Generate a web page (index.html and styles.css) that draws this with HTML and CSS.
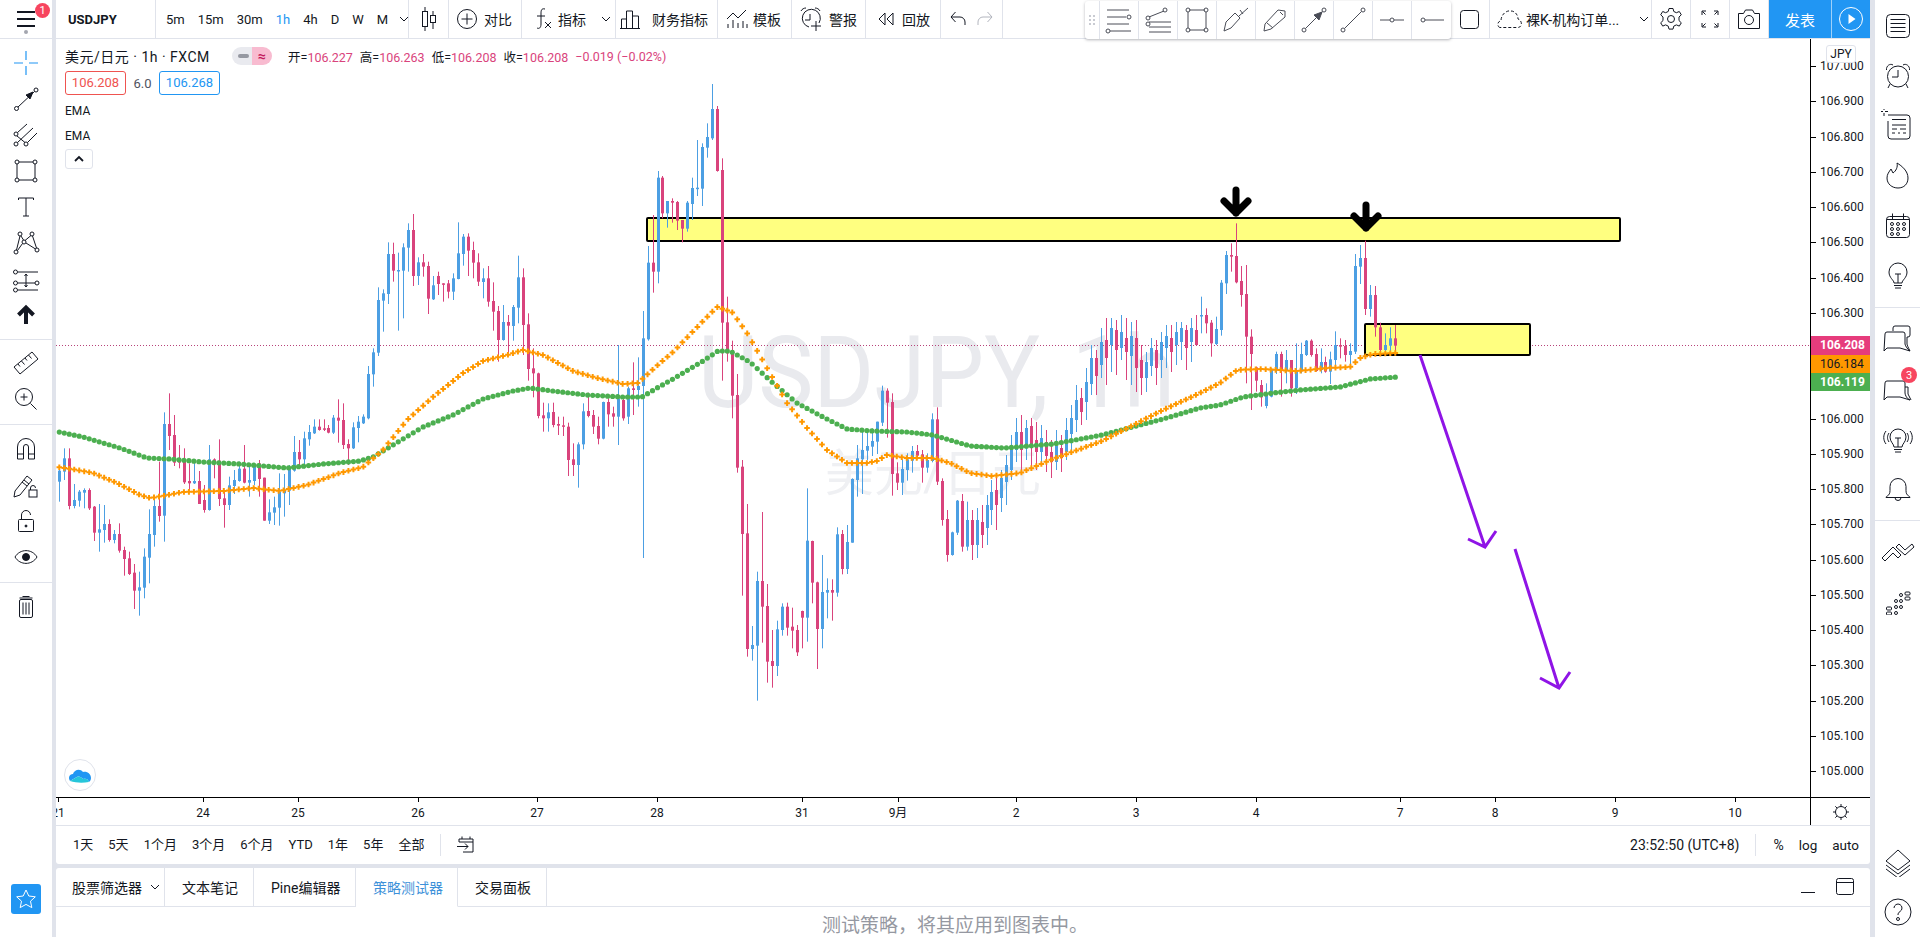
FILE: index.html
```html
<!DOCTYPE html>
<html lang="zh-CN">
<head>
    <meta charset="UTF-8">
    <title>USDJPY 106.208</title>
    <link rel="stylesheet" href="styles.css">
</head>
<body>
<div class="app">
    <aside class="left-bar">
        <div class="menu-cell">
            <span class="burger"><i></i><i></i><i></i></span>
            <span class="badge menu-badge">1</span>
            <span class="menu-dot"></span>
        </div>
        <div class="tool-group first">
            <div class="tool"><svg class="ico blue" width="28" height="28" viewBox="0 0 28 28"><path d="M2 14h9M17 14h9M14 2v9M14 17v9"/></svg></div>
            <div class="tool"><svg class="ico" width="28" height="28" viewBox="0 0 28 28"><circle cx="4.5" cy="23.5" r="2"/><circle cx="24" cy="5" r="2"/><path d="M6 22L22.5 6.5"/><path class="solid" d="M21 7l-7 3 4 4z"/></svg></div>
            <div class="tool"><svg class="ico" width="28" height="28" viewBox="0 0 28 28"><circle cx="4" cy="13" r="2"/><circle cx="4" cy="23" r="2"/><circle cx="14" cy="23" r="2"/><path d="M5.5 11.500L15 3M5.500 21.500L21 7M15.500 21.500L25 12M5 15l8 6.500"/></svg></div>
            <div class="tool"><svg class="ico" width="28" height="28" viewBox="0 0 28 28"><path d="M5 7v14M23 7v14M7 5h14M7 23h14"/><circle cx="5" cy="5" r="2"/><circle cx="23" cy="5" r="2"/><circle cx="5" cy="23" r="2"/><circle cx="23" cy="23" r="2"/></svg></div>
            <div class="tool"><svg class="ico" width="28" height="28" viewBox="0 0 28 28"><path d="M6.500 7V5h15v2M14 5v18M11 23h6"/></svg></div>
            <div class="tool"><svg class="ico" width="28" height="28" viewBox="0 0 28 28"><circle cx="8" cy="5" r="2"/><circle cx="20" cy="5" r="2"/><circle cx="4" cy="23" r="2"/><circle cx="25" cy="21" r="2"/><circle cx="12" cy="13" r="2"/><path d="M8 7l-3.500 14M9 7l2.500 4M19 6.500l-6 5M20.500 7l4 12M5.500 21.500L10.500 14.500M14 14l9.500 6"/></svg></div>
            <div class="tool"><svg class="ico" width="28" height="28" viewBox="0 0 28 28"><circle cx="3.500" cy="7" r="2"/><circle cx="3.500" cy="18" r="2"/><circle cx="25" cy="18" r="2"/><circle cx="3.500" cy="25" r="2"/><path d="M6 7h20M6 18h17M6 25h20M14 9v13M12.500 11l1.500-2 1.500 2M12.500 20l1.500 2 1.500-2"/></svg></div>
            <div class="tool"><svg class="ico bold" width="28" height="28" viewBox="0 0 28 28"><path d="M14 23V7M6.500 14L14 6.500l7.500 7.500"/></svg></div>
        </div>
        <div class="tool-sep"></div>
        <div class="tool-group">
            <div class="tool"><svg class="ico" width="28" height="28" viewBox="0 0 28 28"><path d="M2 18L20 3l6 7-18 15zM6 15l2 2.500M9.500 12l3 3.500M13 9l2 2.500M16.500 6l3 3.500"/></svg></div>
            <div class="tool"><svg class="ico" width="28" height="28" viewBox="0 0 28 28"><circle cx="12" cy="12" r="8.500"/><path d="M8.500 12h7M12 8.500v7M18.500 18.500l6 6"/></svg></div>
        </div>
        <div class="tool-sep wide"></div>
        <div class="tool-group">
            <div class="tool"><svg class="ico" width="28" height="28" viewBox="0 0 28 28"><path d="M5.500 24V12a8.500 8.500 0 0 1 17 0v12h-6V12a2.500 2.500 0 0 0-5 0v12zM5.500 19h6M16.500 19h6"/></svg></div>
            <div class="tool"><svg class="ico" width="28" height="28" viewBox="0 0 28 28"><path d="M3 20L15 5l5 4L8 24l-6 2zM12 9l5 4M10 11l5 4"/><rect x="17" y="19" width="8" height="7"/><path d="M18.500 19v-2a2.500 2.500 0 0 1 5 0"/></svg></div>
            <div class="tool"><svg class="ico" width="28" height="28" viewBox="0 0 28 28"><rect x="6.500" y="12.500" width="15" height="12" rx="1"/><path d="M9.500 12.500V8a4.500 4.500 0 0 1 9 0"/><circle class="solid" cx="14" cy="19" r="1"/></svg></div>
            <div class="tool"><svg class="ico" width="28" height="28" viewBox="0 0 28 28"><path d="M3 14c5-8.500 17-8.500 22 0-5 8.500-17 8.500-22 0z"/><circle class="solid" cx="14" cy="14" r="3.500"/></svg></div>
        </div>
        <div class="tool-sep wide"></div>
        <div class="tool-group">
            <div class="tool"><svg class="ico" width="28" height="28" viewBox="0 0 28 28"><rect x="7.500" y="6.500" width="13" height="18" rx="1.500"/><path d="M7.500 5h13M10.500 3.500h7M11 9.500v12M14 9.500v12M17 9.500v12"/></svg></div>
        </div>
        <button class="star-btn"><svg class="ico white" width="24" height="24" viewBox="0 0 24 24"><path d="M12 3l2.800 6 6.500.800-4.800 4.400 1.300 6.400L12 17.400l-5.800 3.200 1.300-6.400-4.800-4.400 6.500-.800z"/></svg></button>
    </aside>

    <div class="main">
        <header class="top-bar">
            <div class="cell symbol">USDJPY</div>
            <div class="cell intervals">
                <span>5m</span><span>15m</span><span>30m</span><span class="on">1h</span><span>4h</span><span>D</span><span>W</span><span>M</span>
                <svg class="ico chev" width="10" height="6" viewBox="0 0 10 6"><path d="M1 1l4 4 4-4"/></svg>
            </div>
            <div class="cell w-candle"><svg class="ico" width="28" height="28" viewBox="0 0 28 28"><path d="M10 2v24M18 6v18"/><rect class="fill-w" x="7.500" y="6.500" width="5" height="15"/><rect class="fill-w" x="15.500" y="10.500" width="5" height="7"/></svg></div>
            <div class="cell w-compare"><svg class="ico" width="22" height="22" viewBox="0 0 22 22"><circle cx="11" cy="11" r="9.500"/><path d="M11 5.500v11M5.500 11h11"/></svg><span>对比</span></div>
            <div class="cell w-indic"><svg class="ico" width="22" height="24" viewBox="0 0 22 24"><path d="M14 2c-4-1-4 2-4 5v10c0 4-2 5-4 4M6 9h8M14 15l6 6M20 15l-6 6"/></svg><span>指标</span><svg class="ico chev" width="10" height="6" viewBox="0 0 10 6"><path d="M1 1l4 4 4-4"/></svg></div>
            <div class="cell w-fin"><svg class="ico" width="22" height="22" viewBox="0 0 22 22"><path d="M1.500 20V11h5v9M6.500 20V3h6v17M12.500 20V8h6v12M0 20.500h20"/></svg><span>财务指标</span></div>
            <div class="cell w-tpl"><svg class="ico" width="24" height="24" viewBox="0 0 24 24"><path d="M2 12l6-6 5 5 8-8M3 21v-4M8 21v-8M13 21v-5M18 21v-7M22 21v-4"/></svg><span>模板</span></div>
            <div class="cell w-alert"><svg class="ico" width="26" height="26" viewBox="0 0 26 26"><path d="M21 17a9 9 0 1 0-10 4M12 8v6H7M3 5c1-2 3-3 5-3M22 5c-1-2-3-3-5-3M18 15v10M13 20h10"/></svg><span>警报</span></div>
            <div class="cell w-replay"><svg class="ico" width="20" height="18" viewBox="0 0 20 18"><path d="M9 3L3 9l6 6zM17 3l-6 6 6 6z"/></svg><span>回放</span></div>
            <div class="cell w-undo"><svg class="ico" width="20" height="20" viewBox="0 0 20 20"><path d="M3 8h9a5 5 0 0 1 5 5v3M7.500 3L3 8l4.500 5"/></svg><svg class="ico pale" width="20" height="20" viewBox="0 0 20 20"><path d="M17 8H8a5 5 0 0 0-5 5v3M12.500 3L17 8l-4.500 5"/></svg></div>

            <div class="draw-bar">
                <div class="handle"></div>
                <div class="draw-btn"><svg class="ico" width="28" height="28" viewBox="0 0 28 28"><path d="M2 4h22M2 11h19M2 18h22M5 25h21"/><circle cx="24" cy="11" r="2"/><circle cx="3" cy="25" r="2"/></svg></div>
                <div class="draw-btn"><svg class="ico" width="28" height="28" viewBox="0 0 28 28"><path d="M5 11l15-6M5 16h22M5 21h22M5 26h22"/><circle cx="4" cy="12" r="2"/><circle cx="21" cy="4" r="2"/><circle cx="4" cy="18" r="2"/></svg></div>
                <div class="draw-btn"><svg class="ico" width="28" height="28" viewBox="0 0 28 28"><path d="M5 6v16M23 6v16M6 4h16M6 24h16"/><circle cx="5" cy="4" r="2"/><circle cx="23" cy="4" r="2"/><circle cx="5" cy="24" r="2"/><circle cx="23" cy="24" r="2"/></svg></div>
                <div class="draw-btn"><svg class="ico" width="28" height="28" viewBox="0 0 28 28"><path d="M2 25l2-9 9-9 5 5-9 10zM17 10l9-8M18 4l3 4"/></svg></div>
                <div class="draw-btn"><svg class="ico" width="28" height="28" viewBox="0 0 28 28"><path d="M3 25l1-7L17 4l7 1 0 6-14 12zM6 17l6 5M19 6l3 3"/></svg></div>
                <div class="draw-btn"><svg class="ico" width="28" height="28" viewBox="0 0 28 28"><circle cx="4" cy="24" r="2"/><circle cx="24" cy="4" r="2"/><path d="M5.500 22.500l17-17"/><path class="solid" d="M22 6l-8 3 5 5z"/></svg></div>
                <div class="draw-btn"><svg class="ico" width="28" height="28" viewBox="0 0 28 28"><circle cx="4" cy="24" r="2"/><circle cx="24" cy="4" r="2"/><path d="M5.500 22.500l17-17"/></svg></div>
                <div class="draw-btn"><svg class="ico" width="28" height="28" viewBox="0 0 28 28"><circle cx="14" cy="14" r="2"/><path d="M2 14h10M16 14h10"/></svg></div>
                <div class="draw-btn"><svg class="ico" width="28" height="28" viewBox="0 0 28 28"><circle cx="5" cy="14" r="2"/><path d="M7 14h19"/></svg></div>
            </div>

            <div class="cell w-sq"><svg class="ico" width="24" height="24" viewBox="0 0 24 24"><rect x="2.500" y="3.500" width="18" height="18" rx="3"/></svg></div>
            <div class="cell w-layout"><svg class="ico dash" width="26" height="22" viewBox="0 0 26 22"><path d="M3 19.500C0 19 0 13 4 13 4 6 10 2 14 3c4 0 7 4 7 8 4 1 5 8 0 8.500z"/></svg><span class="layout-name">裸K-机构订单...</span><svg class="ico chev" width="10" height="6" viewBox="0 0 10 6"><path d="M1 1l4 4 4-4"/></svg></div>
            <div class="cell w-sq"><svg class="ico" width="24" height="24" viewBox="0 0 24 24"><path d="M10 1.500h4l.800 3 2.600 1.200 2.900-1.200 2 3.300-2.300 2.200v3.600l2.300 2.200-2 3.300-2.900-1.200-2.600 1.200-.800 3h-4l-.800-3-2.600-1.200-2.900 1.200-2-3.300 2.300-2.200V10l-2.300-2.200 2-3.300 2.900 1.200 2.600-1.200z"/><circle cx="12" cy="12" r="3.500"/></svg></div>
            <div class="cell w-sq"><svg class="ico" width="20" height="20" viewBox="0 0 20 20"><path d="M2 6V2h4M14 2h4v4M18 14v4h-4M6 18H2v-4M2.500 2.500l3 3M17.500 2.500l-3 3M17.500 17.500l-3-3M2.500 17.500l3-3"/></svg></div>
            <div class="cell w-sq"><svg class="ico" width="24" height="24" viewBox="0 0 24 24"><path d="M1.500 6.500h5l2-3.500h7l2 3.500h5v15h-21z"/><circle cx="12" cy="13" r="4.500"/></svg></div>
            <button class="publish">发表</button>
            <button class="play"><svg class="ico white" width="26" height="26" viewBox="0 0 26 26"><circle cx="13" cy="13" r="11.500"/><path class="solid-w" d="M10.500 8l7 5-7 5z"/></svg></button>
        </header>

        <section class="chart">
            <div class="chart-row">
                <div class="pane" id="pane">
                    <div class="legend">
                        <div class="legend-top">
                            <span class="legend-title">美元/日元 · 1h · FXCM</span>
                            <span class="pill"><i class="pill-l"></i><b class="pill-r">≈</b></span>
                            <span class="ohlc">开=<em>106.227</em></span><span class="ohlc">高=<em>106.263</em></span><span class="ohlc">低=<em>106.208</em></span><span class="ohlc">收=<em>106.208</em></span><span class="ohlc"><em>−0.019 (−0.02%)</em></span>
                        </div>
                        <div class="legend-quote">
                            <span class="chip sell">106.208</span><span class="spread">6.0</span><span class="chip buy">106.268</span>
                        </div>
                        <div class="study">EMA</div>
                        <div class="study">EMA</div>
                        <div class="collapse"><svg class="ico bold-s" width="12" height="8" viewBox="0 0 12 8"><path d="M2 6l4-4 4 4"/></svg></div>
                    </div>
                    <div class="tv-logo"><svg width="24" height="16" viewBox="0 0 24 16"><path fill="#2196f3" d="M2 14c-2-3-1-7 3-7 1-4 7-6 10-2 4-1 8 2 8 6 0 2-1 3-2 4-1-3-3-4-6-3-2-2-4-3-6-2-2 1-4 2-7 4z"/><path fill="#26c6da" d="M2 14c3-2 5-3 7-4 2-1 4 0 6 2 3-1 5 0 6 3-6 1-13 1-19-1z"/></svg></div>
                </div>
                <div class="price-axis" id="price-axis">
                    <div class="unit">JPY</div>
                    <div class="tag tag-last">106.208</div>
                    <div class="tag tag-orange">106.184</div>
                    <div class="tag tag-green">106.119</div>
                </div>
            </div>
            <div class="time-row">
                <div class="time-axis" id="time-axis"></div>
                <div class="time-gear"><svg class="ico" width="18" height="18" viewBox="0 0 18 18"><circle cx="9" cy="9" r="5.500"/><path d="M9 1v2.500M9 14.500V17M1 9h2.500M14.500 9H17M3.300 3.300l1.800 1.800M12.900 12.900l1.800 1.800M14.700 3.300l-1.800 1.800M5.100 12.900l-1.800 1.800"/></svg></div>
            </div>
        </section>

        <div class="range-bar">
            <div class="ranges"><span>1天</span><span>5天</span><span>1个月</span><span>3个月</span><span>6个月</span><span>YTD</span><span>1年</span><span>5年</span><span>全部</span></div>
            <div class="range-sep"></div>
            <svg class="ico goto" width="20" height="20" viewBox="0 0 20 20"><path d="M3 4h14v13H7M3 4v3h14M6 1.500V4M14 1.500V4M1 11.500h11M9 8.500l3 3-3 3"/></svg>
            <div class="range-right">
                <span class="clock">23:52:50 (UTC+8)</span>
                <div class="range-sep"></div>
                <span class="pct">%</span><span class="log">log</span><span class="auto">auto</span>
            </div>
        </div>

        <section class="panel">
            <div class="tabs">
                <div class="tab t1">股票筛选器<svg class="ico chev" width="10" height="6" viewBox="0 0 10 6"><path d="M1 1l4 4 4-4"/></svg></div>
                <div class="tab t2">文本笔记</div>
                <div class="tab t3">Pine编辑器</div>
                <div class="tab t4 active">策略测试器</div>
                <div class="tab t5">交易面板</div>
                <div class="tabs-right">
                    <svg class="ico" width="14" height="14" viewBox="0 0 14 14"><path d="M0 12.500h14"/></svg>
                    <svg class="ico" width="18" height="18" viewBox="0 0 18 18"><rect x=".5" y=".5" width="17" height="16" rx="2"/><path d="M.5 4.500h17"/></svg>
                </div>
            </div>
            <div class="panel-msg">测试策略，将其应用到图表中。</div>
        </section>
    </div>

    <aside class="right-bar">
        <div class="side-btn"><svg class="ico" width="30" height="30" viewBox="0 0 30 30"><rect x="3.500" y="3.500" width="23" height="23" rx="4"/><path d="M7.500 8.500h15M7.500 12.500h15M7.500 16.500h15M7.500 20.500h15"/></svg></div>
        <div class="side-btn"><svg class="ico" width="30" height="30" viewBox="0 0 30 30"><circle cx="15" cy="15.500" r="10.500"/><path d="M15 9v7H9M3.500 9C3 5 7 2 10 4M26.500 9c.5-4-3.500-7-6.500-5M7 23l-2 4M23 23l2 4"/></svg></div>
        <div class="side-btn"><svg class="ico" width="34" height="34" viewBox="0 0 34 34"><path d="M8 8h19a3 3 0 0 1 3 3v18a3 3 0 0 1-3 3H11a3 3 0 0 1-3-3V14M12 12.500h14M12 18h14M12 22h5M20 22h6M12 26h3M18 26h2M23 26h3M0 4.500h3M5 4.500h3M4 0v3M4 6v3" transform="translate(-1 -2)"/></svg></div>
        <div class="side-btn"><svg class="ico" width="30" height="30" viewBox="0 0 30 30"><path d="M15 27C9 27 4 23 4 17c0-4 2-6 4-9l2 4c3-2 5-6 4-10 5 3 11 8 11 15 0 6-4 10-10 10z"/></svg></div>
        <div class="side-btn"><svg class="ico" width="30" height="30" viewBox="0 0 30 30"><rect x="3.500" y="5.500" width="23" height="21" rx="3"/><path d="M9.500 2.500v6M20.500 2.500v6M3.500 8.500h23"/><circle cx="9" cy="13" r="1.500"/><circle cx="15" cy="13" r="1.500"/><circle cx="21" cy="13" r="1.500"/><circle cx="9" cy="18" r="1.500"/><circle cx="15" cy="18" r="1.500"/><circle cx="21" cy="18" r="1.500"/><circle cx="9" cy="23" r="1.500"/><circle cx="15" cy="23" r="1.500"/></svg></div>
        <div class="side-btn"><svg class="ico" width="30" height="30" viewBox="0 0 30 30"><path d="M11 22c0-3-5-5-5-11a9 9 0 0 1 18 0c0 6-5 8-5 11zM11 24.500h8M12 27h6M15 22v-9M12 13h6"/></svg></div>
        <div class="side-sep"></div>
        <div class="side-btn"><svg class="ico" width="32" height="32" viewBox="0 0 32 32"><path d="M11 8V5a2 2 0 0 1 2-2h13a2 2 0 0 1 2 2v7a2 2 0 0 1-2 2h-1M3 11a2 2 0 0 1 2-2h16a2 2 0 0 1 2 2v10c0 1 2 5 5 7l-10-3H5l-3 3zM25 14v7c0 1 1 3 3 7"/></svg></div>
        <div class="side-btn badge-wrap"><svg class="ico" width="32" height="32" viewBox="0 0 32 32"><path d="M3 10a2 2 0 0 1 2-2h16a2 2 0 0 1 2 2v10c0 2 2 6 5 7l-10-3H5l-3 3zM23 14h3v7l3 6"/></svg><span class="badge chat-badge">3</span></div>
        <div class="side-btn"><svg class="ico" width="34" height="34" viewBox="0 0 34 34"><path d="M13 25c0-3-4-5-4-10a8 8 0 0 1 16 0c0 5-4 7-4 10zM13 27.500h8M14 30h6M17 25v-9M14 16h6M5 9c-3 4-3 9 0 13M8 11c-2 3-2 6 0 9M29 9c3 4 3 9 0 13M26 11c2 3 2 6 0 9"/></svg></div>
        <div class="side-btn"><svg class="ico" width="30" height="30" viewBox="0 0 30 30"><path d="M3 23.500c0-2 4-1 4-7v-4a8 8 0 0 1 16 0v4c0 6 4 5 4 7zM12 23.500a3 3 0 0 0 6 0"/></svg></div>
        <div class="side-sep"></div>
        <div class="side-btn"><svg class="ico" width="34" height="22" viewBox="0 0 34 22"><path d="M1 17l11-11 8 8-3 3-5-5-8 8zM15 6l3-3 6 6 7-6 2 3-9 8z"/></svg></div>
        <div class="side-btn"><svg class="ico" width="26" height="26" viewBox="0 0 26 26"><rect x="1.500" y="18" width="5" height="3" rx="1"/><rect x="1.500" y="23" width="5" height="3" rx="1"/><circle cx="11" cy="12" r="1.500"/><circle cx="11" cy="18" r="1.500"/><circle cx="11" cy="24" r="1.500"/><circle cx="16" cy="12" r="1.500"/><circle cx="16" cy="18" r="1.500"/><circle cx="16" cy="6" r="1.500"/><rect x="20" y="3" width="5" height="3" rx="1"/><rect x="20" y="8" width="5" height="3" rx="1"/></svg></div>
        <div class="side-bottom">
            <div class="side-btn"><svg class="ico" width="30" height="30" viewBox="0 0 30 30"><path d="M15 3l12 11-12 9L3 14zM3 18l12 9 12-9M3 22l12 9 12-9"/></svg></div>
            <div class="side-btn"><svg class="ico" width="30" height="30" viewBox="0 0 30 30"><circle cx="15" cy="15" r="13"/><path d="M11 11a4 4 0 1 1 6 3.500c-1.500 1-2 2-2 3.500"/><circle cx="15" cy="22" r="1.500"/></svg></div>
        </div>
    </aside>
</div>
<script src="chart.js"></script>
</body>
</html>
```

FILE: styles.css
```css
:root {
    --gutter: #e0e3eb;
    --ink: #131722;
    --blue: #2196f3;
    --pink: #d9437c;
    --line: #e0e3eb;
}

* {
    margin: 0;
    padding: 0;
    box-sizing: border-box;
}

body {
    height: 100vh;
    overflow: hidden;
    background: var(--gutter);
    color: var(--ink);
    font-family: Roboto, "Noto Sans CJK SC", sans-serif;
    font-size: 13px;
}

.app {
    display: flex;
    height: 100%;
}

/* shared svg icon look */
.ico {
    fill: none;
    stroke: var(--ink);
    stroke-width: 1;
    flex: none;
    display: block;
}

.ico .solid { fill: var(--ink); }
.ico .fill-w { fill: #fff; }
.ico .solid-w { fill: #fff; stroke: none; }
.ico.blue { stroke: var(--blue); stroke-width: 1.2; }
.ico.bold { stroke-width: 4; }
.ico.bold-s { stroke-width: 1.8; }
.ico.white { stroke: #fff; }
.ico.pale { stroke: #b2b5be; }
.ico.dash { stroke-dasharray: 3 2; }

.badge {
    position: absolute;
    display: flex;
    align-items: center;
    justify-content: center;
    width: 15px;
    height: 15px;
    border-radius: 50%;
    background: #f7455f;
    color: #fff;
    font-size: 11px;
}

/* left toolbar */
.left-bar {
    width: 52px;
    margin-right: 4px;
    background: #fff;
    display: flex;
    flex-direction: column;
    flex: none;
}

.menu-cell {
    position: relative;
    height: 39px;
    border-bottom: 1px solid var(--line);
    flex: none;
}

.burger {
    position: absolute;
    left: 17px;
    top: 11px;
    width: 18px;
}

.burger i {
    display: block;
    height: 2px;
    margin-bottom: 5px;
    background: var(--ink);
}

.menu-badge {
    left: 35px;
    top: 3px;
}

.menu-dot {
    position: absolute;
    left: 24px;
    top: 30px;
    width: 4px;
    height: 4px;
    border-radius: 50%;
    background: #a3a6af;
}

.tool-group.first {
    padding-top: 6px;
}

.tool {
    height: 36px;
    display: flex;
    align-items: center;
    justify-content: center;
}

.tool-sep {
    height: 1px;
    margin: 6px 0 5px;
    background: var(--line);
    flex: none;
}

.tool-sep.wide {
    margin: 7px 0 6px;
}

.star-btn {
    width: 30px;
    height: 30px;
    margin: auto 0 23px 11px;
    background: var(--blue);
    border: none;
    border-radius: 3px;
    display: flex;
    align-items: center;
    justify-content: center;
}

/* middle column */
.main {
    flex: 1;
    min-width: 0;
    display: flex;
    flex-direction: column;
}

.top-bar {
    height: 39px;
    flex: none;
    display: flex;
    background: #fff;
    border-bottom: 1px solid var(--line);
}

.cell {
    display: flex;
    align-items: center;
    flex: none;
    border-right: 1px solid var(--line);
    font-size: 14px;
    white-space: nowrap;
}

.symbol {
    width: 100px;
    padding-left: 12px;
    font-weight: 700;
    font-size: 13px;
}

.intervals {
    width: 253px;
    padding-left: 10px;
    gap: 13px;
    font-size: 13px;
}

.intervals .on { color: var(--blue); }
.intervals .chev { margin-left: -2px; }

.w-candle { width: 40px; justify-content: center; }
.w-compare { width: 73px; padding-left: 7px; gap: 6px; }
.w-indic { width: 94px; padding-left: 9px; gap: 5px; }
.w-indic .chev { margin-left: 10px; }
.w-fin { width: 102px; padding-left: 4px; gap: 10px; }
.w-tpl { width: 74px; padding-left: 7px; gap: 4px; }
.w-alert { width: 74px; padding-left: 6px; gap: 5px; }
.w-replay { width: 75px; padding-left: 10px; gap: 6px; }
.w-undo { width: 62px; padding-left: 7px; gap: 7px; }
.w-sq { width: 39px; justify-content: center; }
.w-layout { width: 162px; padding-left: 7px; gap: 3px; }
.layout-name { width: 96px; font-size: 14px; white-space: nowrap; }
.w-layout .chev { margin-left: 14px; }

.draw-bar {
    position: relative;
    z-index: 5;
    width: 366px;
    height: 38px;
    margin: 1px 0 0 82px;
    display: flex;
    background: #fff;
    border-radius: 3px;
    box-shadow: 0 1px 3px rgba(42, 46, 57, 0.35);
    flex: none;
}

.handle {
    width: 15px;
    background: radial-gradient(circle, #c9cbd2 1px, transparent 1.300px) 3px 9px / 4px 4px;
    background-repeat: repeat;
    background-clip: content-box;
    padding: 12px 3px;
    border-right: 1px solid var(--line);
    flex: none;
}

.draw-btn {
    width: 39px;
    display: flex;
    align-items: center;
    justify-content: center;
    border-right: 1px solid var(--line);
    flex: none;
}

.draw-btn:last-child { border-right: none; }
.draw-btn .ico { stroke: #4a4d57; }
.draw-btn .ico .solid { fill: #4a4d57; }

.publish {
    width: 62px;
    height: 38px;
    background: var(--blue);
    color: #fff;
    border: none;
    font: 15px Roboto, "Noto Sans CJK SC", sans-serif;
    flex: none;
}

.play {
    width: 39px;
    height: 38px;
    background: var(--blue);
    border: none;
    border-left: 1px solid #9ed0f9;
    display: flex;
    align-items: center;
    justify-content: center;
    flex: none;
}

/* chart */
.chart {
    background: #fff;
    flex: none;
    border-bottom: 1px solid var(--line);
}

.chart-row {
    display: flex;
    height: 758px;
}

.pane {
    position: relative;
    width: 1754px;
    overflow: hidden;
    flex: none;
}

.pane svg.plot {
    position: absolute;
    left: 0;
    top: 0;
}

.legend {
    position: absolute;
    left: 9px;
    top: 8px;
    z-index: 2;
}

.legend-top {
    display: flex;
    align-items: center;
    height: 18px;
    font-size: 12.500px;
    white-space: nowrap;
}

.legend-title {
    width: 167px;
    font-size: 14px;
    letter-spacing: 0.5px;
}

.pill {
    display: flex;
    width: 40px;
    height: 18px;
    margin-right: 16px;
    border-radius: 9px;
    overflow: hidden;
}

.pill-l {
    position: relative;
    width: 20px;
    background: #e9eaef;
}

.pill-l::after {
    content: "";
    position: absolute;
    left: 6px;
    top: 7px;
    width: 11px;
    height: 4px;
    border-radius: 2px;
    background: #9598a1;
}

.pill-r {
    width: 20px;
    background: #f8bbd0;
    color: #c2185b;
    font-size: 14px;
    line-height: 18px;
    text-align: center;
}

.ohlc { margin-right: 7px; }

.ohlc em {
    color: var(--pink);
    font-style: normal;
}

.legend-quote {
    display: flex;
    align-items: center;
    height: 24px;
    margin: 6px 0 4px;
}

.chip {
    width: 61px;
    height: 24px;
    line-height: 22px;
    text-align: center;
    border-radius: 3px;
    border: 1px solid;
}

.sell { color: #ef5350; border-color: #ef5350; }
.buy { color: var(--blue); border-color: var(--blue); }

.spread {
    width: 33px;
    text-align: center;
    color: #50535e;
}

.study {
    height: 25px;
    line-height: 25px;
    font-size: 12px;
}

.collapse {
    width: 28px;
    height: 20px;
    border: 1px solid var(--line);
    border-radius: 3px;
    display: flex;
    align-items: center;
    justify-content: center;
}

.tv-logo {
    position: absolute;
    left: 8px;
    top: 720px;
    width: 32px;
    height: 32px;
    border: 1px solid var(--line);
    border-radius: 50%;
    background: #fff;
    display: flex;
    align-items: center;
    justify-content: center;
}

.price-axis {
    position: relative;
    width: 60px;
    border-left: 1px solid #000;
    overflow: hidden;
    font-size: 12px;
}

.p-tick {
    position: absolute;
    left: 0;
    width: 5px;
    height: 1px;
    background: #000;
}

.p-label {
    position: absolute;
    left: 9px;
    transform: translateY(-50%);
}

.unit {
    position: absolute;
    left: 15px;
    top: 6px;
    z-index: 2;
    width: 30px;
    height: 18px;
    line-height: 16px;
    text-align: center;
    background: #fff;
    border: 1px solid var(--line);
    border-radius: 3px;
}

.tag {
    position: absolute;
    left: 0;
    z-index: 2;
    width: 60px;
    height: 19px;
    line-height: 19px;
    padding-left: 9px;
    font-size: 12px;
    font-weight: 700;
    color: #fff;
}

.tag-last { top: 297px; background: #e63c7c; }
.tag-orange { top: 316px; height: 18px; background: #ff9800; color: #131722; font-weight: 400; }
.tag-green { top: 334px; height: 18px; background: #4caf50; }

.time-row {
    display: flex;
    height: 28px;
    border-top: 1px solid #000;
    font-size: 12px;
}

.time-axis {
    position: relative;
    width: 1754px;
    overflow: hidden;
    flex: none;
}

.t-tick {
    position: absolute;
    top: 0;
    width: 1px;
    height: 4px;
    background: #000;
}

.t-label {
    position: absolute;
    top: 8px;
    line-height: 14px;
    transform: translateX(-50%);
}

.time-gear {
    width: 60px;
    border-left: 1px solid #000;
    display: flex;
    align-items: center;
    justify-content: center;
}

.range-bar {
    height: 38px;
    flex: none;
    display: flex;
    align-items: center;
    padding-left: 17px;
    background: #fff;
    border-radius: 0 0 3px 3px;
    line-height: 18px;
}

.ranges {
    display: flex;
    gap: 15px;
}

.range-sep {
    width: 1px;
    height: 22px;
    margin-left: 16px;
    background: var(--line);
}

.goto { margin-left: 15px; }

.range-right {
    display: flex;
    align-items: center;
    margin-left: auto;
    padding-right: 11px;
    font-size: 13.500px;
}

.clock { font-size: 14px; }
.pct { margin-left: 17px; font-size: 14px; }
.log { margin-left: 15px; }
.auto { margin-left: 15px; }

/* bottom panel */
.panel {
    flex: 1;
    margin-top: 4px;
    background: #fff;
    border-radius: 3px 3px 0 0;
}

.tabs {
    display: flex;
    height: 39px;
    border-bottom: 1px solid var(--line);
    font-size: 14px;
}

.tab {
    display: flex;
    align-items: center;
    padding-left: 17px;
    margin-bottom: -1px;
    border-right: 1px solid var(--line);
    border-bottom: 1px solid var(--line);
    flex: none;
}

.t1 { width: 109px; padding-left: 16px; gap: 8px; }
.t2 { width: 89px; }
.t3 { width: 102px; }
.t4 { width: 102px; }
.t5 { width: 89px; }

.tab.active {
    color: #3d91d9;
    border-bottom-color: #fff;
}

.tabs-right {
    display: flex;
    align-items: center;
    gap: 21px;
    margin-left: auto;
    padding: 0 16px 0 0;
}

.panel-msg {
    padding-top: 8px;
    text-align: center;
    font-size: 19px;
    line-height: 22px;
    color: #9598a1;
    margin-left: -16px;
}

/* right toolbar */
.right-bar {
    width: 45px;
    margin-left: 5px;
    padding-top: 1px;
    background: #fff;
    display: flex;
    flex-direction: column;
    flex: none;
}

.side-btn {
    height: 50px;
    display: flex;
    align-items: center;
    justify-content: center;
    flex: none;
}

.side-sep {
    height: 1px;
    margin: 6px 0;
    background: var(--line);
    flex: none;
}

.badge-wrap { position: relative; }

.chat-badge {
    left: 26px;
    top: 3px;
    width: 16px;
    height: 16px;
}

.side-bottom {
    margin-top: auto;
}
```

FILE: chart.js
```js
// pane origin on the page, the plot svg uses page coordinates
const PANE_X = 56, PANE_Y = 39, PANE_W = 1754, PANE_H = 758;
const BAR0 = 59.3, STEP = 4.985;
const UP = '#4c9fe3', DOWN = '#d9437c';

// bars traced from the reference: [up?, high, top, bottom, low]
// y = y0 + value / k
const segments = [
    { y0: 380, k: 3, bars: [
        [1,265,272,305,365],[1,205,235,275,300],[0,205,235,378,388],[1,312,360,378,385],[1,330,335,362,380],
        [1,325,330,338,385],[0,325,330,385,390],[0,378,380,458,483],[1,372,448,458,515],[1,375,432,450,488],
        [0,418,432,480,485],[1,450,462,480,490],[0,430,462,512,518],[0,500,510,537,587],[0,515,535,582,585],
        [0,552,578,632,687],[1,575,622,632,707],[1,505,530,623,655],[1,388,462,533,610],[1,360,378,465,500],
        [0,245,378,408,425],[1,97,132,407,485],[0,40,132,168,210],[0,105,165,248,258],[0,195,235,248,265],
        [0,205,240,307,312],[0,250,303,310,330],[1,240,303,310,312],[0,273,303,372,372],[0,315,360,390,398],
        [1,195,238,390,392],[0,235,238,250,295],[0,178,242,357,378],[0,330,355,375,443],[1,290,316,375,390],
        [1,270,300,318,342],[1,245,266,303,305],[0,195,266,308,310],[1,250,300,308,350],[1,250,258,303,315],
        [0,240,250,297,350],[0,293,293,422,422],[1,358,397,422,432],[1,350,382,398,435],[1,280,335,383,437],
        [1,282,332,340,410],[1,255,265,332,375],[1,168,216,272,275],[0,180,216,238,260],[1,155,175,238,265],
        [1,135,156,178,197],[1,118,140,160,162],[0,118,140,150,152],[0,118,145,149,153],[0,135,144,158,160],
        [1,105,113,158,162],[0,58,113,122,188],[0,70,120,195,207],[0,178,192,205,255],[1,127,142,205,207],
        [1,108,125,144,187],[1,103,110,130,132]
    ]},
    { y0: 200, k: 3, bars: [
        [1,498,522,655,658],[1,445,457,523,560],[1,262,300,458,468],[1,268,280,302,395],[1,127,162,282,312],
        [0,128,162,212,245],[1,158,210,212,392],[1,130,142,212,355],[1,70,90,143,215],[0,42,90,228,258],
        [1,172,187,228,255],[0,162,187,200,230],[0,185,198,296,342],[1,228,256,298,300],[0,215,228,252,285],
        [0,250,250,252,305],[0,240,250,275,295],[1,220,235,275,300],[1,67,160,237,238],[1,102,110,162,197],
        [0,100,110,152,228],[0,125,150,188,235],[0,160,187,245,258],[1,205,235,246,295],[0,198,235,305,320],
        [0,247,303,335,392],[0,318,333,420,485],[1,315,366,420,422],[0,345,366,377,460],[1,315,321,378,422],
        [1,167,232,323,370],[0,205,232,375,465],[0,340,373,507,542],[0,445,505,520,592],[0,518,520,648,655],
        [0,608,646,655,695],[1,610,637,655,695],[0,608,636,675,682],[0,650,672,677,705],[0,650,676,680,708],
        [0,668,680,780,828],[0,730,778,795,828],[1,727,733,795,863],[1,610,634,733,748],[0,578,633,648,652],
        [0,630,645,680,702],[0,650,678,716,733],[1,605,606,716,718],[0,595,606,643,680],[0,620,640,650,680],
        [1,435,595,650,735],[0,590,600,655,662],[1,560,565,650,672],[0,487,565,570,645],[1,472,558,570,620],
        [1,333,415,558,1074]
    ]},
    { y0: 70, k: 3, bars: [
        [1,528,578,808,812],[0,435,578,605,668],[1,303,323,605,640],[0,318,323,430,445],[1,393,393,430,473],
        [0,385,393,398,458],[0,393,396,452,480],[0,450,450,476,517],[1,393,398,476,485],[1,323,354,402,450],
        [1,210,353,356,378],[1,220,231,356,408],[1,160,201,233,263],[1,42,117,205,210],[0,108,117,303,305],
        [0,265,300,758,932]
    ]},
    { y0: 300, k: 3, bars: [
        [0,-10,67,160,185],[0,122,150,287,355],[0,222,285,503,518],[0,480,500,702,887],[0,612,700,1047,1070],
        [1,978,1035,1047,1082],[1,815,843,1037,1202],[0,636,843,920,1028],[0,852,918,1085,1148],[0,990,1083,1098,1163],
        [1,962,988,1098,1128],[1,910,920,990,1007],[0,908,920,983,1007],[0,923,980,992,1045],[0,975,990,1057,1068],
        [0,932,933,953,1045],[1,565,722,953,1025],[0,722,723,848,910],[0,845,847,987,1107],[1,765,876,987,1045],
        [1,835,870,878,955],[0,838,870,878,962],[1,682,703,878,890],[0,690,702,807,823],[1,675,726,807,822],
        [1,535,537,728,728],[1,435,475,540,590],[1,390,450,478,582],[1,388,438,452,480],[1,385,423,440,468],
        [1,365,365,425,462],[1,257,272,368,378],[0,265,272,308,413],[0,280,306,522,587],[0,487,520,548,570],
        [1,478,507,548,585],[1,460,478,510,542],[1,438,453,482,518],[0,435,453,467,478],[0,450,463,503,548],
        [1,460,480,503,518],[1,340,358,483,487],[0,322,358,545,555],[0,535,543,660,677],[0,630,657,765,785],
        [1,695,697,765,767],[1,600,602,698,705],[0,582,603,740,755],[1,605,660,740,752]
    ]},
    { y0: 0, k: 1, bars: [
        [0,510,520,545,560],[1,508,520,545,558],[0,505,522,535,548],[1,495,505,528,545],[1,480,492,510,525],
        [0,478,490,505,530],[1,470,478,498,512],[1,455,465,482,505],[1,435,448,470,480],[1,418,432,450,462],
        [0,415,432,450,470],[1,420,428,445,460],[0,418,426,446,468],[0,422,440,452,470],[1,425,438,452,465],
        [0,430,442,456,472],[0,440,452,462,478],[1,430,446,462,470],[0,435,448,458,472],[1,418,430,452,460],
        [1,405,418,434,452],[1,385,400,420,432],[0,388,398,412,425],[1,368,382,402,420],[1,345,358,384,395],
        [0,350,358,376,395],[1,328,342,365,378],[0,318,340,358,385],[1,318,328,345,372],[0,320,330,350,375],
        [1,315,332,348,360],[0,318,338,352,380],[1,322,336,356,385],[0,320,338,368,392],[0,345,360,378,395],
        [1,352,362,378,392],[1,338,348,366,376],[0,340,350,368,385],[1,332,342,360,378],[1,325,336,348,368],
        [0,325,338,352,372],[1,322,332,345,365],[1,322,328,342,360],[0,325,330,348,370],[1,318,328,342,362],
        [0,315,330,345,345]
    ]},
    { y0: 170, k: 3, bars: [
        [1,380,435,437,490],[0,415,435,460,490],[0,450,458,520,560],[1,440,477,522,525],[1,330,338,480,497],
        [1,243,255,340,372],[0,220,255,260,305],[0,160,258,337,340],[0,288,333,375,410],[0,285,372,500,640],
        [0,478,500,552,720],[0,590,592,632,665],[0,630,645,682,710],[1,640,672,708,715],[1,595,597,680,682],
        [1,545,552,602,612],[0,545,552,600,680],[1,540,570,600,640],[0,570,570,655,680],[1,520,600,655,672],
        [1,518,552,600,610],[1,510,512,555,558],[0,508,512,555,560],[0,535,552,603,605],[1,535,576,600,610],
        [0,560,576,605,608],[1,545,568,605,642],[1,484,525,570,590],[0,505,525,530,565],[0,510,528,555,575],
        [1,520,543,555,585],[1,252,288,545,552],[1,225,264,290,342],[0,212,264,417,435],[1,345,375,417,440],
        [0,348,375,472,500],[0,458,472,540,545],[1,490,525,540,545],[1,472,505,527,545],[0,465,505,527,545]
    ]}
];

const emaGreen = [[59,432],[83,437],[120,448],[147,458],[170,459],[203,462],[240,464],[287,468],[323,464],[360,461],[373,457],[398,442],[423,427],[453,415],[483,399],[513,391],[530,388],[553,391],[587,395],[623,397],[642,397],[657,388],[673,379],[703,361],[718,351],[730,351],[750,362],[773,383],[797,403],[823,417],[847,429],[873,431],[907,432],[933,435],[960,443],[970,446],[1004,448],[1053,444],[1102,435],[1163,419],[1200,408],[1220,405],[1243,397],[1273,393],[1300,390],[1340,387],[1370,379],[1397,377]];
const emaOrange = [[58,467],[77,470],[93,473],[117,483],[140,495],[150,498],[163,496],[183,492],[223,491],[253,488],[280,491],[307,485],[340,473],[363,467],[383,450],[407,420],[433,397],[463,373],[483,361],[507,355],[523,350],[543,355],[573,371],[597,378],[623,384],[638,383],[660,363],[673,352],[707,317],[717,307],[732,312],[747,333],[767,368],[787,403],[807,428],[827,450],[847,463],[867,463],[877,461],[887,455],[907,458],[933,458],[950,463],[970,473],[992,476],[1020,473],[1053,459],[1102,441],[1163,410],[1200,393],[1220,383],[1237,370],[1260,369],[1297,371],[1327,368],[1350,367],[1360,358],[1373,354],[1397,353]];

function lerp(points, x) {
    for (let i = 1; i < points.length; i++) {
        if (x <= points[i][0]) {
            const [x0, y0] = points[i - 1], [x1, y1] = points[i];
            return y0 + (y1 - y0) * (x - x0) / (x1 - x0);
        }
    }
    return points[points.length - 1][1];
}

function drawPlot() {
    const parts = [];

    // watermark
    parts.push('<text x="698" y="407" font-size="100" fill="#e9eaee" textLength="477" lengthAdjust="spacingAndGlyphs">USDJPY, 1h</text>');
    parts.push('<text x="825" y="491" font-size="50" fill="#eff0f3" textLength="216" lengthAdjust="spacingAndGlyphs">美元/日元</text>');

    // last price line
    parts.push('<path d="M56 345.5H1810" stroke="#b8437a" stroke-dasharray="1 2"/>');

    // zones
    parts.push('<rect x="647" y="218" width="973" height="23" rx="1" fill="#ffff80" stroke="#000" stroke-width="2"/>');
    parts.push('<rect x="1365" y="324" width="165" height="31" rx="1" fill="#ffff80" stroke="#000" stroke-width="2"/>');

    // candles
    let i = 0;
    for (const seg of segments) {
        for (const [up, hi, top, bot, lo] of seg.bars) {
            const x = Math.round(BAR0 + i * STEP);
            const color = up ? UP : DOWN;
            const y = v => seg.y0 + v / seg.k;
            parts.push(`<path d="M${x + 0.5} ${y(hi)}V${y(lo)}" stroke="${color}"/>`);
            parts.push(`<rect x="${x - 1}" y="${y(top)}" width="3" height="${Math.max(1.5, (bot - top) / seg.k)}" fill="${color}"/>`);
            i++;
        }
    }

    // moving averages
    for (let n = 0; n < i; n++) {
        const x = BAR0 + n * STEP;
        const g = lerp(emaGreen, x);
        parts.push(`<circle cx="${x}" cy="${g}" r="2.6" fill="#4caf50"/>`);
    }
    for (let n = 0; n < i; n++) {
        const x = BAR0 + n * STEP;
        const o = lerp(emaOrange, x);
        parts.push(`<path d="M${x - 2.8} ${o}h5.6M${x} ${o - 2.8}v5.6" stroke="#ff9800" stroke-width="2"/>`);
    }

    // markers
    parts.push('<path d="M1236 190V213M1224 201l12 12 12-12M1366 205V228M1354 216l12 12 12-12" fill="none" stroke="#000" stroke-width="7" stroke-linecap="round" stroke-linejoin="round"/>');
    parts.push('<path d="M1420 355L1485 547M1468 539L1485 547L1496 531M1515 549L1559 688M1540 678L1559 688L1570 672" fill="none" stroke="#8f14e6" stroke-width="3"/>');

    return `<svg class="plot" width="${PANE_W}" height="${PANE_H}" viewBox="${PANE_X} ${PANE_Y} ${PANE_W} ${PANE_H}" font-family="Roboto, 'Noto Sans CJK SC', sans-serif">${parts.join('')}</svg>`;
}

function drawPriceAxis() {
    const axis = document.getElementById('price-axis');
    let html = '';
    for (let k = 0; k <= 20; k++) {
        const top = 66 + 35.25 * k - PANE_Y;
        html += `<div class="p-tick" style="top:${Math.round(top)}px"></div>`;
        html += `<div class="p-label" style="top:${top}px">${(107 - k / 10).toFixed(3)}</div>`;
    }
    axis.insertAdjacentHTML('afterbegin', html);
}

function drawTimeAxis() {
    const marks = [['21',58],['24',203],['25',298],['26',418],['27',537],['28',657],['31',802],['9月',898],['2',1016],['3',1136],['4',1256],['7',1400],['8',1495],['9',1615],['10',1735]];
    document.getElementById('time-axis').innerHTML = marks.map(([label, x]) =>
        `<div class="t-tick" style="left:${x - PANE_X}px"></div><div class="t-label" style="left:${x - PANE_X}px">${label}</div>`
    ).join('');
}

document.getElementById('pane').insertAdjacentHTML('afterbegin', drawPlot());
drawPriceAxis();
drawTimeAxis();
```
